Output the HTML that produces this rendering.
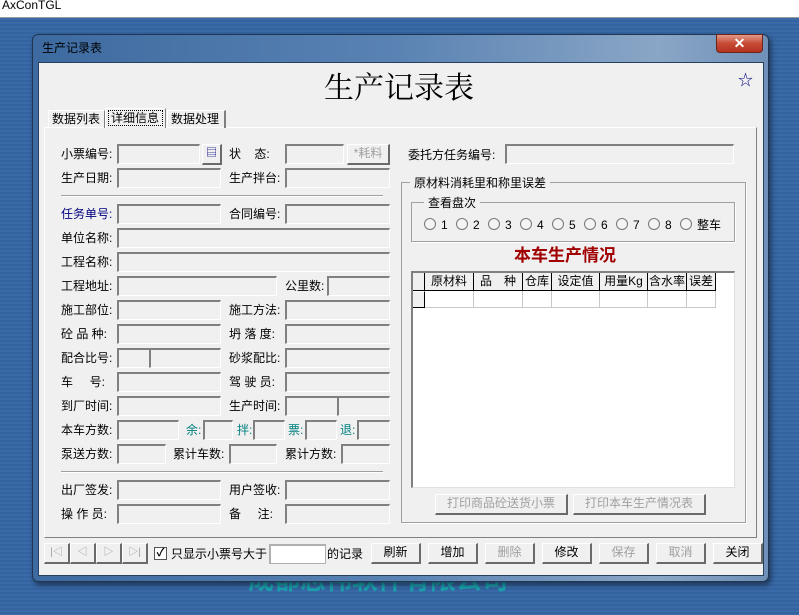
<!DOCTYPE html>
<html><head><meta charset="utf-8"><style>
*{margin:0;padding:0;box-sizing:border-box}
body{width:799px;height:615px;position:relative;overflow:hidden;background:#3767a5;font-family:"Liberation Sans","Noto Sans CJK SC","WenQuanYi Zen Hei",sans-serif;font-size:12px;color:#000}
.a{position:absolute}
.f{position:absolute;height:20px;background:#f0f0f0;border-top:2px solid #808080;border-left:2px solid #808080;border-right:1px solid #fff;border-bottom:1px solid #fff;box-shadow:inset 0 0 0 0 #000}
.l{position:absolute;font-size:12px;line-height:14px;white-space:pre}
.b{position:absolute;height:21px;background:#f0f0f0;border-top:1px solid #fff;border-left:1px solid #fff;border-right:2px solid #6a6a6a;border-bottom:2px solid #6a6a6a;text-align:center;line-height:17px;font-size:12px}
.g{color:#a0a0a0}
.sep{position:absolute;height:2px;border-top:1px solid #a0a0a0;border-bottom:1px solid #fff}
.r{position:absolute;width:12px;height:12px;border-radius:50%;background:#f4f4f4;border:1px solid #777}
.c{position:absolute;top:0;height:18px;border-right:1px solid #000;border-bottom:1px solid #000;text-align:center;line-height:17px;font-size:12px;background:#f0f0f0}
.d{position:absolute;top:18px;height:17px;border-right:1px solid #c8c8c8;border-bottom:1px solid #c8c8c8}
</style></head><body>
<div class="a" style="left:0;top:0;width:799px;height:18px;background:#fff;border-bottom:1px solid #999"></div>
<div class="l" style="left:2px;top:-2px;font-size:12px">AxConTGL</div>
<div class="a" style="left:0;top:18px;width:799px;height:597px;background:repeating-linear-gradient(180deg,#3a6aa8 0 2px,#3464a0 2px 4px)"></div>
<div class="l" style="left:248px;top:565px;font-size:26px;line-height:30px;color:#1aa3b0;font-weight:bold">成都志伟软件有限公司</div>
<!-- window frame -->
<div class="a" style="left:32px;top:34px;width:737px;height:548px;border-radius:6px;background:linear-gradient(90deg,#3d6aa0 0%,#5a83b3 50%,#8aa6c6 85%,#6f90b8 100%);border:1px solid #1f3550;box-shadow:2px 3px 6px rgba(0,0,0,.5)"></div>
<div class="l" style="left:42px;top:41px;font-size:12px">生产记录表</div>
<div class="a" style="left:716px;top:34px;width:47px;height:19px;border-radius:0 0 4px 4px;background:linear-gradient(#e29a88,#c74a35 50%,#b33320);border:1px solid #6e2418;color:#fff;text-align:center;font-weight:bold;font-size:14px;line-height:17px">✕</div>
<div class="a" style="left:38px;top:62px;width:726px;height:514px;background:#f0f0f0;border:1px solid #284060"></div>
<div class="l" style="left:324px;top:72px;font-size:30px;line-height:34px;font-family:'Liberation Serif','Noto Serif CJK SC',serif">生产记录表</div>
<div class="l" style="left:738px;top:74px;font-size:15px;color:#000080">☆</div>
<!-- tabs -->
<div class="a" style="left:44px;top:127px;width:713px;height:411px;border:1px solid #fff;border-right:1px solid #808080;border-bottom:1px solid #808080"></div>
<div class="a" style="left:48px;top:110px;width:57px;height:18px;border:1px solid #fff;border-right:1px solid #808080;border-bottom:none;line-height:16px;padding-left:3px;font-size:12px">数据列表</div>
<div class="a" style="left:105px;top:108px;width:61px;height:20px;border:1px solid #fff;border-right:1px solid #808080;border-bottom:none;background:#f0f0f0"><div style="margin:1px 2px;border:1px dotted #000;line-height:14px;padding-left:2px;font-size:12px">详细信息</div></div>
<div class="a" style="left:167px;top:110px;width:59px;height:18px;border:1px solid #fff;border-right:2px solid #808080;border-bottom:none;line-height:16px;padding-left:3px;font-size:12px">数据处理</div>

<!-- left column -->
<div class="l" style="left:61px;top:147px">小票编号:</div><div class="f" style="left:117px;top:144px;width:83px"></div>
<div class="b" style="left:202px;top:144px;width:20px;color:#000080;font-size:11px">▤</div>
<div class="l" style="left:229px;top:147px">状    态:</div><div class="f" style="left:285px;top:144px;width:59px"></div>
<div class="b g" style="left:347px;top:144px;width:43px">*耗料</div>
<div class="l" style="left:61px;top:171px">生产日期:</div><div class="f" style="left:117px;top:168px;width:104px"></div>
<div class="l" style="left:229px;top:171px">生产拌台:</div><div class="f" style="left:285px;top:168px;width:105px"></div>
<div class="sep" style="left:61px;top:195px;width:322px"></div>
<div class="l" style="left:61px;top:207px;color:#000080">任务单号:</div><div class="f" style="left:117px;top:204px;width:104px"></div>
<div class="l" style="left:229px;top:207px">合同编号:</div><div class="f" style="left:285px;top:204px;width:105px"></div>
<div class="l" style="left:61px;top:231px">单位名称:</div><div class="f" style="left:117px;top:228px;width:273px"></div>
<div class="l" style="left:61px;top:255px">工程名称:</div><div class="f" style="left:117px;top:252px;width:273px"></div>
<div class="l" style="left:61px;top:279px">工程地址:</div><div class="f" style="left:117px;top:276px;width:160px"></div>
<div class="l" style="left:285px;top:279px">公里数:</div><div class="f" style="left:327px;top:276px;width:63px"></div>
<div class="l" style="left:61px;top:303px">施工部位:</div><div class="f" style="left:117px;top:300px;width:104px"></div>
<div class="l" style="left:229px;top:303px">施工方法:</div><div class="f" style="left:285px;top:300px;width:105px"></div>
<div class="l" style="left:61px;top:327px">砼 品 种:</div><div class="f" style="left:117px;top:324px;width:104px"></div>
<div class="l" style="left:229px;top:327px">坍 落 度:</div><div class="f" style="left:285px;top:324px;width:105px"></div>
<div class="l" style="left:61px;top:351px">配合比号:</div><div class="f" style="left:117px;top:348px;width:33px"></div><div class="f" style="left:149px;top:348px;width:72px"></div>
<div class="l" style="left:229px;top:351px">砂浆配比:</div><div class="f" style="left:285px;top:348px;width:105px"></div>
<div class="l" style="left:61px;top:375px">车     号:</div><div class="f" style="left:117px;top:372px;width:104px"></div>
<div class="l" style="left:229px;top:375px">驾 驶 员:</div><div class="f" style="left:285px;top:372px;width:105px"></div>
<div class="l" style="left:61px;top:399px">到厂时间:</div><div class="f" style="left:117px;top:396px;width:104px"></div>
<div class="l" style="left:229px;top:399px">生产时间:</div><div class="f" style="left:285px;top:396px;width:53px"></div><div class="f" style="left:337px;top:396px;width:53px"></div>
<div class="l" style="left:61px;top:423px">本车方数:</div><div class="f" style="left:117px;top:420px;width:62px"></div>
<div class="l" style="left:186px;top:423px;color:#008080">余:</div><div class="f" style="left:203px;top:420px;width:30px"></div>
<div class="l" style="left:237px;top:423px;color:#008080">拌:</div><div class="f" style="left:253px;top:420px;width:32px"></div>
<div class="l" style="left:288px;top:423px;color:#008080">票:</div><div class="f" style="left:305px;top:420px;width:32px"></div>
<div class="l" style="left:340px;top:423px;color:#008080">退:</div><div class="f" style="left:357px;top:420px;width:33px"></div>
<div class="l" style="left:61px;top:447px">泵送方数:</div><div class="f" style="left:117px;top:444px;width:49px"></div>
<div class="l" style="left:173px;top:447px">累计车数:</div><div class="f" style="left:229px;top:444px;width:48px"></div>
<div class="l" style="left:285px;top:447px">累计方数:</div><div class="f" style="left:341px;top:444px;width:49px"></div>
<div class="sep" style="left:61px;top:471px;width:322px"></div>
<div class="l" style="left:61px;top:483px">出厂签发:</div><div class="f" style="left:117px;top:480px;width:104px"></div>
<div class="l" style="left:229px;top:483px">用户签收:</div><div class="f" style="left:285px;top:480px;width:105px"></div>
<div class="l" style="left:61px;top:507px">操 作 员:</div><div class="f" style="left:117px;top:504px;width:104px"></div>
<div class="l" style="left:229px;top:507px">备     注:</div><div class="f" style="left:285px;top:504px;width:105px"></div>

<!-- right -->
<div class="l" style="left:408px;top:148px">委托方任务编号:</div><div class="f" style="left:505px;top:144px;width:229px"></div>
<div class="a" style="left:401px;top:182px;width:345px;height:341px;border:1px solid #a0a0a0;box-shadow:1px 1px 0 #fff"></div>
<div class="l" style="left:410px;top:176px;background:#f0f0f0;padding:0 4px">原材料消耗里和称里误差</div>
<div class="a" style="left:411px;top:202px;width:324px;height:40px;border:1px solid #a0a0a0;box-shadow:1px 1px 0 #fff"></div>
<div class="l" style="left:424px;top:196px;background:#f0f0f0;padding:0 4px">查看盘次</div>
<div class="r" style="left:424px;top:218px"></div><div class="l" style="left:441px;top:218px">1</div>
<div class="r" style="left:456px;top:218px"></div><div class="l" style="left:473px;top:218px">2</div>
<div class="r" style="left:488px;top:218px"></div><div class="l" style="left:505px;top:218px">3</div>
<div class="r" style="left:520px;top:218px"></div><div class="l" style="left:537px;top:218px">4</div>
<div class="r" style="left:552px;top:218px"></div><div class="l" style="left:569px;top:218px">5</div>
<div class="r" style="left:584px;top:218px"></div><div class="l" style="left:601px;top:218px">6</div>
<div class="r" style="left:616px;top:218px"></div><div class="l" style="left:633px;top:218px">7</div>
<div class="r" style="left:648px;top:218px"></div><div class="l" style="left:665px;top:218px">8</div>
<div class="r" style="left:680px;top:218px"></div><div class="l" style="left:697px;top:218px">整车</div>
<div class="l" style="left:514px;top:246px;font-size:17px;line-height:20px;font-weight:bold;color:#a00000">本车生产情况</div>
<div class="a" style="left:411px;top:271px;width:324px;height:217px;background:#fff;border-top:2px solid #808080;border-left:2px solid #808080;border-right:1px solid #e0e0e0;border-bottom:1px solid #e0e0e0">
<div class="c" style="left:0;width:12px"></div>
<div class="c" style="left:12px;width:49px">原材料</div>
<div class="c" style="left:61px;width:49px">品　种</div>
<div class="c" style="left:110px;width:29px">仓库</div>
<div class="c" style="left:139px;width:48px">设定值</div>
<div class="c" style="left:187px;width:48px">用量Kg</div>
<div class="c" style="left:235px;width:39px">含水率</div>
<div class="c" style="left:274px;width:29px">误差</div>
<div class="c" style="left:0;top:18px;height:17px;width:12px;border-top:1px solid #fff"></div>
<div class="d" style="left:12px;width:49px"></div><div class="d" style="left:61px;width:49px"></div><div class="d" style="left:110px;width:29px"></div><div class="d" style="left:139px;width:48px"></div><div class="d" style="left:187px;width:48px"></div><div class="d" style="left:235px;width:39px"></div><div class="d" style="left:274px;width:29px"></div>
</div>
<div class="b g" style="left:435px;top:494px;width:133px">打印商品砼送货小票</div>
<div class="b g" style="left:573px;top:494px;width:133px">打印本车生产情况表</div>

<!-- bottom toolbar -->
<div class="b g" style="left:44px;top:543px;width:26px;font-size:10px">|◁</div>
<div class="b g" style="left:70px;top:543px;width:26px;font-size:10px">◁</div>
<div class="b g" style="left:96px;top:543px;width:26px;font-size:10px">▷</div>
<div class="b g" style="left:122px;top:543px;width:26px;font-size:10px">▷|</div>
<div class="a" style="left:154px;top:547px;width:13px;height:13px;background:#fff;border:1px solid #555;font-size:11px;line-height:11px;text-align:center;font-weight:bold">✓</div>
<div class="l" style="left:171px;top:547px">只显示小票号大于</div>
<div class="f" style="left:269px;top:544px;width:57px;background:#fff;border-color:#b0b0b0"></div>
<div class="l" style="left:327px;top:547px">的记录</div>
<div class="b" style="left:371px;top:543px;width:50px">刷新</div>
<div class="b" style="left:428px;top:543px;width:50px">增加</div>
<div class="b g" style="left:485px;top:543px;width:50px">删除</div>
<div class="b" style="left:542px;top:543px;width:50px">修改</div>
<div class="b g" style="left:599px;top:543px;width:50px">保存</div>
<div class="b g" style="left:656px;top:543px;width:50px">取消</div>
<div class="b" style="left:713px;top:543px;width:50px">关闭</div>
</body></html>
